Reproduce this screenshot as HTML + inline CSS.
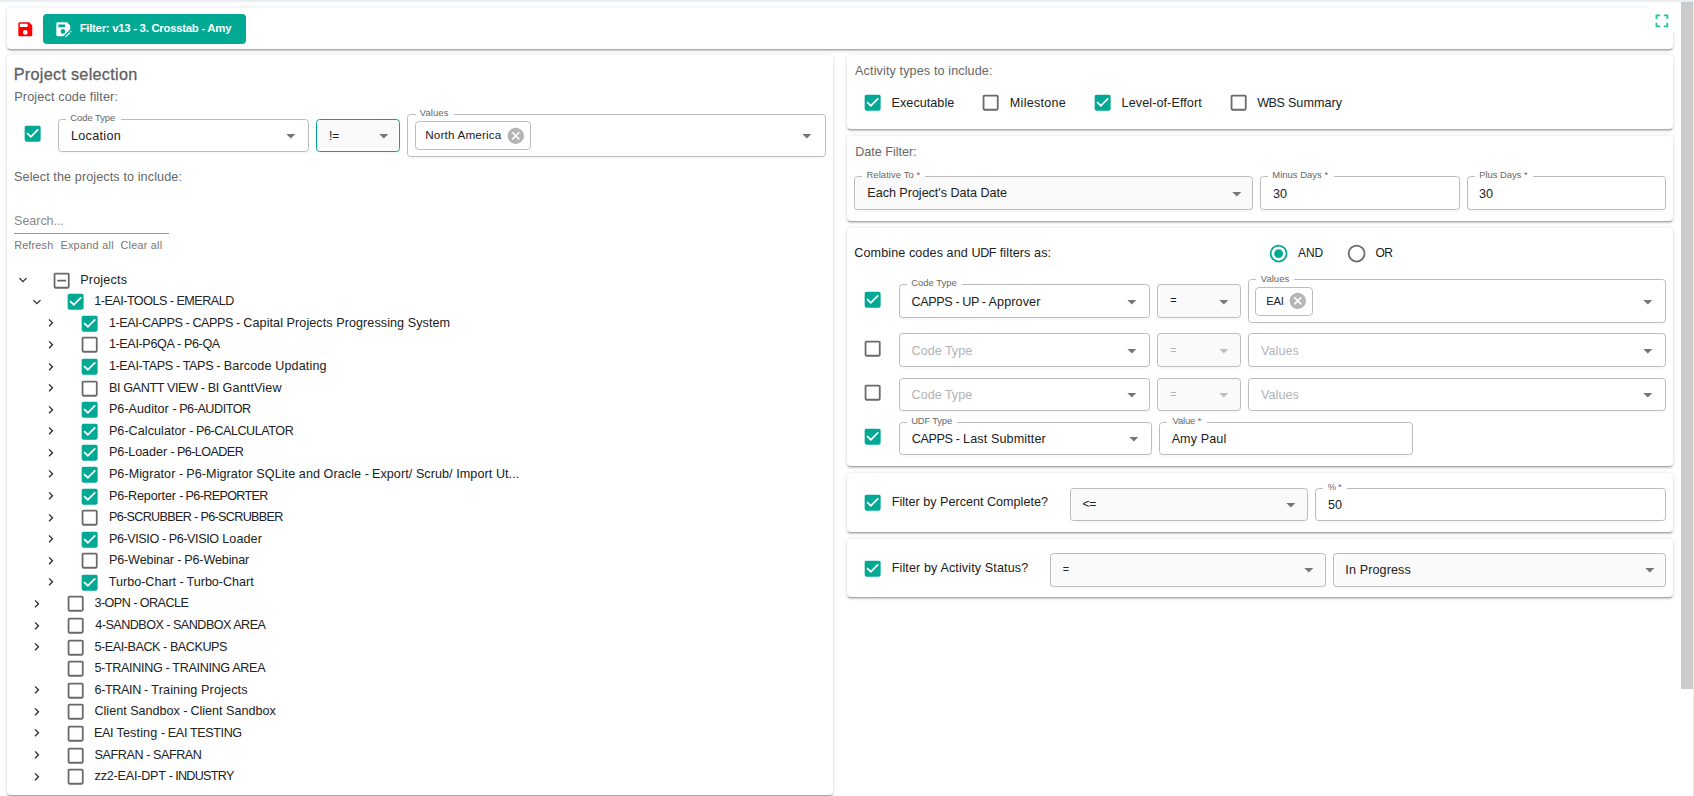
<!DOCTYPE html>
<html lang="en"><head><meta charset="utf-8"><title>Filter: v13 - 3. Crosstab - Amy</title>
<style>
*{box-sizing:content-box;margin:0;padding:0}
html,body{width:1694px;height:796px;overflow:hidden;background:#fff}
body{position:relative;font-family:"Liberation Sans",sans-serif;}
.topstrip{position:absolute;left:0;top:0;width:1694px;height:2px;background:#e8edf1}
.card{position:absolute;background:#fff;border-radius:4px;box-shadow:0 2.7px .9px -1.8px rgba(0,0,0,.2),0 1.8px 1.8px 0 rgba(0,0,0,.14),0 .9px 4.5px 0 rgba(0,0,0,.11)}
.ic{position:absolute;display:block;overflow:visible}
.t{position:absolute;white-space:nowrap;line-height:20px;font-weight:normal;display:block}
.btn{position:absolute;background:#00a994;border:0;border-radius:4px;font:inherit;text-align:left;overflow:visible}
.fld{position:absolute;border:1px solid #bcbcbc;border-radius:3.6px;box-shadow:0 2px .6px rgba(0,0,0,.025)}
.notch{position:absolute}
.tree{position:absolute}
.fsbtn{position:absolute;background:#fff}
.chip{position:absolute;border:1px solid #bdbdbd;border-radius:4px;background:#fff}
.uline{position:absolute;height:1px;background:#949494}
.sbar{position:absolute;left:1681px;top:2px;width:12px;height:686.5px;background:#cbcbcb}
.sedge{position:absolute;left:1693px;top:2px;width:1px;height:794px;background:#e8ecee}
</style></head>
<body>
<div class="topstrip"></div>
<header class="card" style="left:7px;top:8px;width:1666px;height:41px;">
<svg class="ic " style="left:8.70px;top:11.70px;width:18.60px;height:18.60px" viewBox="0 0 24 24"><path fill="#ff0000" d="M15,9H5V5H15M12,19A3,3 0 0,1 9,16A3,3 0 0,1 12,13A3,3 0 0,1 15,16A3,3 0 0,1 12,19M17,3H5C3.89,3 3,3.9 3,5V19A2,2 0 0,0 5,21H19A2,2 0 0,0 21,19V7L17,3Z"/></svg>
<button class="btn" type="button" style="left:36px;top:6px;width:203px;height:30px;">
<svg class="ic " style="left:10.75px;top:5.75px;width:18.50px;height:18.50px" viewBox="0 0 24 24"><path fill="#fff" fill-rule="evenodd" d="M5,3H17L21,7V12L12,21H5A2,2 0 0,1 3,19V5C3,3.9 3.89,3 5,3M5.7,5.9V9.3H14.3V5.9H5.7M11.6,11.8A3,3 0 0,0 8.6,14.8A3,3 0 0,0 11.6,17.8A3,3 0 0,0 14.6,14.8A3,3 0 0,0 11.6,11.8M19.9,16L14.5,21.4V22.5H15.6L21,17.1L19.9,16M20.7,15.2L21.8,16.3L22.7,15.4C22.9,15.2 22.9,14.9 22.7,14.7L22.3,14.3C22.1,14.1 21.8,14.1 21.6,14.3L20.7,15.2Z"/></svg>
<span id="t1" class="t " style="left:36.70px;top:4px;font-size:11.4px;color:#fff;font-weight:bold;letter-spacing:-0.286px;">Filter: v13 - 3. Crosstab - Amy</span>
</button>
</header>
<div class="fsbtn" style="left:1648px;top:2px;width:33px;height:30px;">
<svg class="ic " style="left:2.60px;top:7.50px;width:21.80px;height:21.80px" viewBox="0 0 24 24"><path fill="#1cc6a4" d="M5,5H10V7H7V10H5V5M14,5H19V10H17V7H14V5M17,14H19V19H14V17H17V14M10,17V19H5V14H7V17H10Z"/></svg>
</div>
<section class="card" style="left:7px;top:55px;width:826px;height:740px;">
<h2 id="t2" class="t " style="left:6.72px;top:9px;font-size:16.2px;color:#606060;letter-spacing:0.298px;-webkit-text-stroke:0.28px #606060;">Project selection</h2>
<span id="t3" class="t " style="left:7.29px;top:32px;font-size:12.6px;color:#666666;letter-spacing:0.151px;">Project code filter:</span>
<svg class="ic " style="left:15.05px;top:68.05px;width:21.30px;height:21.30px" viewBox="0 0 24 24"><path fill="#00a994" d="M10,17L5,12L6.41,10.58L10,14.17L17.59,6.58L19,8M19,3H5C3.89,3 3,3.89 3,5V19A2,2 0 0,0 5,21H19A2,2 0 0,0 21,19V5C21,3.89 20.1,3 19,3Z"/></svg>
<div class="fld" style="left:51.00px;top:64.00px;width:249.00px;height:31.00px;background:#fff;border-color:#bcbcbc">
</div>
<div class="notch" style="left:59.00px;top:64.00px;width:55.00px;height:1px;background:#fff"></div>
<span id="t4" class="t lbl" style="left:63.35px;top:53px;font-size:9.45px;color:#666666;letter-spacing:-0.066px;">Code Type</span>
<span id="t5" class="t " style="left:63.96px;top:71px;font-size:12.6px;color:#212121;letter-spacing:0.314px;">Location</span>
<svg class="ic " style="left:272.90px;top:69.75px;width:21.60px;height:21.60px" viewBox="0 0 24 24"><path fill="#757575" d="M7,10L12,15L17,10H7Z"/></svg>
<div class="fld" style="left:309.00px;top:64.00px;width:82.00px;height:31.00px;background:#fafafa;border-color:#00a994">
</div>
<span id="t6" class="t " style="left:321.90px;top:71px;font-size:12.2px;color:#212121;">!=</span>
<svg class="ic " style="left:365.80px;top:69.75px;width:21.60px;height:21.60px" viewBox="0 0 24 24"><path fill="#757575" d="M7,10L12,15L17,10H7Z"/></svg>
<div class="fld" style="left:400.00px;top:59.00px;width:417.00px;height:41.00px;background:#fff;border-color:#bcbcbc">
</div>
<div class="notch" style="left:409.00px;top:59.00px;width:38.00px;height:1px;background:#fff"></div>
<span id="t7" class="t lbl" style="left:412.81px;top:48px;font-size:9.45px;color:#666666;letter-spacing:0.093px;">Values</span>
<div class="chip" style="left:408px;top:66px;width:114px;height:27px;"></div>
<span id="t8" class="t " style="left:418.27px;top:70px;font-size:11.7px;color:#212121;letter-spacing:0.165px;">North America</span>
<svg class="ic " style="left:499.00px;top:71.20px;width:19.60px;height:19.60px" viewBox="0 0 24 24"><path fill="#b5b5b5" d="M12,2C17.53,2 22,6.47 22,12C22,17.53 17.53,22 12,22C6.47,22 2,17.53 2,12C2,6.47 6.47,2 12,2M15.59,7L12,10.59L8.41,7L7,8.41L10.59,12L7,15.59L8.41,17L12,13.41L15.59,17L17,15.59L13.41,12L17,8.41L15.59,7Z"/></svg>
<svg class="ic " style="left:788.90px;top:69.75px;width:21.60px;height:21.60px" viewBox="0 0 24 24"><path fill="#757575" d="M7,10L12,15L17,10H7Z"/></svg>
<span id="t9" class="t " style="left:7.10px;top:112px;font-size:12.6px;color:#666666;letter-spacing:0.109px;">Select the projects to include:</span>
<span id="t10" class="t " style="left:7.12px;top:156px;font-size:12.6px;color:#8a8a8a;letter-spacing:-0.082px;">Search...</span>
<div class="uline" style="left:7px;top:177.5px;width:155px;height:1px;"></div>
<span id="t11" class="t " style="left:7.16px;top:180px;font-size:10.8px;color:#757575;letter-spacing:0.197px;">Refresh</span>
<span id="t12" class="t " style="left:53.41px;top:180px;font-size:10.8px;color:#757575;letter-spacing:0.305px;">Expand all</span>
<span id="t13" class="t " style="left:113.47px;top:180px;font-size:10.8px;color:#757575;letter-spacing:0.245px;">Clear all</span>
<div class="tree" style="left:7px;top:213px;width:812px;height:520px;">
<svg class="ic " style="left:1.30px;top:4.20px;width:15.90px;height:15.90px" viewBox="0 0 24 24"><path fill="#2b2b2b" d="M7.41,8.58L12,13.17L16.59,8.58L18,10L12,16L6,10L7.41,8.58Z"/></svg>
<svg class="ic " style="left:36.75px;top:1.70px;width:21.30px;height:21.30px" viewBox="0 0 24 24"><path fill="#696969" d="M19,19V5H5V19H19M19,3A2,2 0 0,1 21,5V19A2,2 0 0,1 19,21H5A2,2 0 0,1 3,19V5C3,3.89 3.9,3 5,3H19M17,11V13H7V11H17Z"/></svg>
<span id="t14" class="t " style="left:66.16px;top:2px;font-size:12.6px;color:#212121;letter-spacing:0.192px;">Projects</span>
<svg class="ic " style="left:15.20px;top:25.79px;width:15.90px;height:15.90px" viewBox="0 0 24 24"><path fill="#2b2b2b" d="M7.41,8.58L12,13.17L16.59,8.58L18,10L12,16L6,10L7.41,8.58Z"/></svg>
<svg class="ic " style="left:50.85px;top:23.29px;width:21.30px;height:21.30px" viewBox="0 0 24 24"><path fill="#00a994" d="M10,17L5,12L6.41,10.58L10,14.17L17.59,6.58L19,8M19,3H5C3.89,3 3,3.89 3,5V19A2,2 0 0,0 5,21H19A2,2 0 0,0 21,19V5C21,3.89 20.1,3 19,3Z"/></svg>
<span id="t15" class="t " style="left:80.27px;top:23px;font-size:12.6px;color:#212121;letter-spacing:-0.010px;"><span style="letter-spacing:-0.510px">1-EAI-TOOLS - EMERALD</span></span>
<svg class="ic " style="left:28.90px;top:47.37px;width:15.60px;height:15.60px" viewBox="0 0 24 24"><path fill="#2b2b2b" d="M8.59,16.58L13.17,12L8.59,7.41L10,6L16,12L10,18L8.59,16.58Z"/></svg>
<svg class="ic " style="left:64.85px;top:44.87px;width:21.30px;height:21.30px" viewBox="0 0 24 24"><path fill="#00a994" d="M10,17L5,12L6.41,10.58L10,14.17L17.59,6.58L19,8M19,3H5C3.89,3 3,3.89 3,5V19A2,2 0 0,0 5,21H19A2,2 0 0,0 21,19V5C21,3.89 20.1,3 19,3Z"/></svg>
<span id="t16" class="t " style="left:94.88px;top:45px;font-size:12.6px;color:#212121;letter-spacing:0.069px;"><span style="letter-spacing:-0.431px">1-EAI-CAPPS - CAPPS -</span> Capital Projects Progressing System</span>
<svg class="ic " style="left:28.90px;top:68.95px;width:15.60px;height:15.60px" viewBox="0 0 24 24"><path fill="#2b2b2b" d="M8.59,16.58L13.17,12L8.59,7.41L10,6L16,12L10,18L8.59,16.58Z"/></svg>
<svg class="ic " style="left:64.85px;top:66.46px;width:21.30px;height:21.30px" viewBox="0 0 24 24"><path fill="#696969" d="M19,3H5C3.89,3 3,3.89 3,5V19A2,2 0 0,0 5,21H19A2,2 0 0,0 21,19V5C21,3.89 20.1,3 19,3M19,5V19H5V5H19Z"/></svg>
<span id="t17" class="t " style="left:94.88px;top:66px;font-size:12.6px;color:#212121;letter-spacing:0.133px;"><span style="letter-spacing:-0.367px">1-EAI-P6QA - P6-QA</span></span>
<svg class="ic " style="left:28.90px;top:90.54px;width:15.60px;height:15.60px" viewBox="0 0 24 24"><path fill="#2b2b2b" d="M8.59,16.58L13.17,12L8.59,7.41L10,6L16,12L10,18L8.59,16.58Z"/></svg>
<svg class="ic " style="left:64.85px;top:88.04px;width:21.30px;height:21.30px" viewBox="0 0 24 24"><path fill="#00a994" d="M10,17L5,12L6.41,10.58L10,14.17L17.59,6.58L19,8M19,3H5C3.89,3 3,3.89 3,5V19A2,2 0 0,0 5,21H19A2,2 0 0,0 21,19V5C21,3.89 20.1,3 19,3Z"/></svg>
<span id="t18" class="t " style="left:94.88px;top:88px;font-size:12.6px;color:#212121;letter-spacing:0.131px;"><span style="letter-spacing:-0.369px">1-EAI-TAPS - TAPS -</span> Barcode Updating</span>
<svg class="ic " style="left:28.90px;top:112.12px;width:15.60px;height:15.60px" viewBox="0 0 24 24"><path fill="#2b2b2b" d="M8.59,16.58L13.17,12L8.59,7.41L10,6L16,12L10,18L8.59,16.58Z"/></svg>
<svg class="ic " style="left:64.85px;top:109.63px;width:21.30px;height:21.30px" viewBox="0 0 24 24"><path fill="#696969" d="M19,3H5C3.89,3 3,3.89 3,5V19A2,2 0 0,0 5,21H19A2,2 0 0,0 21,19V5C21,3.89 20.1,3 19,3M19,5V19H5V5H19Z"/></svg>
<span id="t19" class="t " style="left:94.90px;top:110px;font-size:12.6px;color:#212121;letter-spacing:0.134px;"><span style="letter-spacing:-0.366px">BI GANTT VIEW - BI</span> GanttView</span>
<svg class="ic " style="left:28.90px;top:133.71px;width:15.60px;height:15.60px" viewBox="0 0 24 24"><path fill="#2b2b2b" d="M8.59,16.58L13.17,12L8.59,7.41L10,6L16,12L10,18L8.59,16.58Z"/></svg>
<svg class="ic " style="left:64.85px;top:131.21px;width:21.30px;height:21.30px" viewBox="0 0 24 24"><path fill="#00a994" d="M10,17L5,12L6.41,10.58L10,14.17L17.59,6.58L19,8M19,3H5C3.89,3 3,3.89 3,5V19A2,2 0 0,0 5,21H19A2,2 0 0,0 21,19V5C21,3.89 20.1,3 19,3Z"/></svg>
<span id="t20" class="t " style="left:94.90px;top:131px;font-size:12.6px;color:#212121;letter-spacing:0.045px;">P6-Auditor <span style="letter-spacing:-0.455px">- P6-AUDITOR</span></span>
<svg class="ic " style="left:28.90px;top:155.30px;width:15.60px;height:15.60px" viewBox="0 0 24 24"><path fill="#2b2b2b" d="M8.59,16.58L13.17,12L8.59,7.41L10,6L16,12L10,18L8.59,16.58Z"/></svg>
<svg class="ic " style="left:64.85px;top:152.80px;width:21.30px;height:21.30px" viewBox="0 0 24 24"><path fill="#00a994" d="M10,17L5,12L6.41,10.58L10,14.17L17.59,6.58L19,8M19,3H5C3.89,3 3,3.89 3,5V19A2,2 0 0,0 5,21H19A2,2 0 0,0 21,19V5C21,3.89 20.1,3 19,3Z"/></svg>
<span id="t21" class="t " style="left:94.90px;top:153px;font-size:12.6px;color:#212121;letter-spacing:0.044px;">P6-Calculator <span style="letter-spacing:-0.456px">- P6-CALCULATOR</span></span>
<svg class="ic " style="left:28.90px;top:176.88px;width:15.60px;height:15.60px" viewBox="0 0 24 24"><path fill="#2b2b2b" d="M8.59,16.58L13.17,12L8.59,7.41L10,6L16,12L10,18L8.59,16.58Z"/></svg>
<svg class="ic " style="left:64.85px;top:174.38px;width:21.30px;height:21.30px" viewBox="0 0 24 24"><path fill="#00a994" d="M10,17L5,12L6.41,10.58L10,14.17L17.59,6.58L19,8M19,3H5C3.89,3 3,3.89 3,5V19A2,2 0 0,0 5,21H19A2,2 0 0,0 21,19V5C21,3.89 20.1,3 19,3Z"/></svg>
<span id="t22" class="t " style="left:94.90px;top:174px;font-size:12.6px;color:#212121;letter-spacing:-0.078px;">P6-Loader <span style="letter-spacing:-0.578px">- P6-LOADER</span></span>
<svg class="ic " style="left:28.90px;top:198.46px;width:15.60px;height:15.60px" viewBox="0 0 24 24"><path fill="#2b2b2b" d="M8.59,16.58L13.17,12L8.59,7.41L10,6L16,12L10,18L8.59,16.58Z"/></svg>
<svg class="ic " style="left:64.85px;top:195.97px;width:21.30px;height:21.30px" viewBox="0 0 24 24"><path fill="#00a994" d="M10,17L5,12L6.41,10.58L10,14.17L17.59,6.58L19,8M19,3H5C3.89,3 3,3.89 3,5V19A2,2 0 0,0 5,21H19A2,2 0 0,0 21,19V5C21,3.89 20.1,3 19,3Z"/></svg>
<span id="t23" class="t " style="left:94.90px;top:196px;font-size:12.6px;color:#212121;letter-spacing:0.065px;">P6-Migrator <span style="letter-spacing:-0.435px">-</span> P6-Migrator SQLite and Oracle <span style="letter-spacing:-0.435px">-</span> Export/ Scrub/ Import Ut...</span>
<svg class="ic " style="left:28.90px;top:220.05px;width:15.60px;height:15.60px" viewBox="0 0 24 24"><path fill="#2b2b2b" d="M8.59,16.58L13.17,12L8.59,7.41L10,6L16,12L10,18L8.59,16.58Z"/></svg>
<svg class="ic " style="left:64.85px;top:217.55px;width:21.30px;height:21.30px" viewBox="0 0 24 24"><path fill="#00a994" d="M10,17L5,12L6.41,10.58L10,14.17L17.59,6.58L19,8M19,3H5C3.89,3 3,3.89 3,5V19A2,2 0 0,0 5,21H19A2,2 0 0,0 21,19V5C21,3.89 20.1,3 19,3Z"/></svg>
<span id="t24" class="t " style="left:94.90px;top:218px;font-size:12.6px;color:#212121;letter-spacing:-0.151px;">P6-Reporter <span style="letter-spacing:-0.651px">- P6-REPORTER</span></span>
<svg class="ic " style="left:28.90px;top:241.64px;width:15.60px;height:15.60px" viewBox="0 0 24 24"><path fill="#2b2b2b" d="M8.59,16.58L13.17,12L8.59,7.41L10,6L16,12L10,18L8.59,16.58Z"/></svg>
<svg class="ic " style="left:64.85px;top:239.14px;width:21.30px;height:21.30px" viewBox="0 0 24 24"><path fill="#696969" d="M19,3H5C3.89,3 3,3.89 3,5V19A2,2 0 0,0 5,21H19A2,2 0 0,0 21,19V5C21,3.89 20.1,3 19,3M19,5V19H5V5H19Z"/></svg>
<span id="t25" class="t " style="left:94.90px;top:239px;font-size:12.6px;color:#212121;letter-spacing:-0.161px;"><span style="letter-spacing:-0.661px">P6-SCRUBBER - P6-SCRUBBER</span></span>
<svg class="ic " style="left:28.90px;top:263.22px;width:15.60px;height:15.60px" viewBox="0 0 24 24"><path fill="#2b2b2b" d="M8.59,16.58L13.17,12L8.59,7.41L10,6L16,12L10,18L8.59,16.58Z"/></svg>
<svg class="ic " style="left:64.85px;top:260.72px;width:21.30px;height:21.30px" viewBox="0 0 24 24"><path fill="#00a994" d="M10,17L5,12L6.41,10.58L10,14.17L17.59,6.58L19,8M19,3H5C3.89,3 3,3.89 3,5V19A2,2 0 0,0 5,21H19A2,2 0 0,0 21,19V5C21,3.89 20.1,3 19,3Z"/></svg>
<span id="t26" class="t " style="left:94.90px;top:261px;font-size:12.6px;color:#212121;letter-spacing:0.089px;"><span style="letter-spacing:-0.411px">P6-VISIO - P6-VISIO</span> Loader</span>
<svg class="ic " style="left:28.90px;top:284.81px;width:15.60px;height:15.60px" viewBox="0 0 24 24"><path fill="#2b2b2b" d="M8.59,16.58L13.17,12L8.59,7.41L10,6L16,12L10,18L8.59,16.58Z"/></svg>
<svg class="ic " style="left:64.85px;top:282.31px;width:21.30px;height:21.30px" viewBox="0 0 24 24"><path fill="#696969" d="M19,3H5C3.89,3 3,3.89 3,5V19A2,2 0 0,0 5,21H19A2,2 0 0,0 21,19V5C21,3.89 20.1,3 19,3M19,5V19H5V5H19Z"/></svg>
<span id="t27" class="t " style="left:94.90px;top:282px;font-size:12.6px;color:#212121;letter-spacing:-0.129px;">P6-Webinar <span style="letter-spacing:-0.629px">-</span> P6-Webinar</span>
<svg class="ic " style="left:28.90px;top:306.39px;width:15.60px;height:15.60px" viewBox="0 0 24 24"><path fill="#2b2b2b" d="M8.59,16.58L13.17,12L8.59,7.41L10,6L16,12L10,18L8.59,16.58Z"/></svg>
<svg class="ic " style="left:64.85px;top:303.89px;width:21.30px;height:21.30px" viewBox="0 0 24 24"><path fill="#00a994" d="M10,17L5,12L6.41,10.58L10,14.17L17.59,6.58L19,8M19,3H5C3.89,3 3,3.89 3,5V19A2,2 0 0,0 5,21H19A2,2 0 0,0 21,19V5C21,3.89 20.1,3 19,3Z"/></svg>
<span id="t28" class="t " style="left:94.84px;top:304px;font-size:12.6px;color:#212121;letter-spacing:-0.016px;">Turbo-Chart <span style="letter-spacing:-0.516px">-</span> Turbo-Chart</span>
<svg class="ic " style="left:15.20px;top:327.98px;width:15.60px;height:15.60px" viewBox="0 0 24 24"><path fill="#2b2b2b" d="M8.59,16.58L13.17,12L8.59,7.41L10,6L16,12L10,18L8.59,16.58Z"/></svg>
<svg class="ic " style="left:50.85px;top:325.48px;width:21.30px;height:21.30px" viewBox="0 0 24 24"><path fill="#696969" d="M19,3H5C3.89,3 3,3.89 3,5V19A2,2 0 0,0 5,21H19A2,2 0 0,0 21,19V5C21,3.89 20.1,3 19,3M19,5V19H5V5H19Z"/></svg>
<span id="t29" class="t " style="left:80.44px;top:325px;font-size:12.6px;color:#212121;letter-spacing:-0.045px;"><span style="letter-spacing:-0.545px">3-OPN - ORACLE</span></span>
<svg class="ic " style="left:15.20px;top:349.56px;width:15.60px;height:15.60px" viewBox="0 0 24 24"><path fill="#2b2b2b" d="M8.59,16.58L13.17,12L8.59,7.41L10,6L16,12L10,18L8.59,16.58Z"/></svg>
<svg class="ic " style="left:50.85px;top:347.06px;width:21.30px;height:21.30px" viewBox="0 0 24 24"><path fill="#696969" d="M19,3H5C3.89,3 3,3.89 3,5V19A2,2 0 0,0 5,21H19A2,2 0 0,0 21,19V5C21,3.89 20.1,3 19,3M19,5V19H5V5H19Z"/></svg>
<span id="t30" class="t " style="left:81.24px;top:347px;font-size:12.6px;color:#212121;letter-spacing:-0.019px;"><span style="letter-spacing:-0.519px">4-SANDBOX - SANDBOX AREA</span></span>
<svg class="ic " style="left:15.20px;top:371.15px;width:15.60px;height:15.60px" viewBox="0 0 24 24"><path fill="#2b2b2b" d="M8.59,16.58L13.17,12L8.59,7.41L10,6L16,12L10,18L8.59,16.58Z"/></svg>
<svg class="ic " style="left:50.85px;top:368.65px;width:21.30px;height:21.30px" viewBox="0 0 24 24"><path fill="#696969" d="M19,3H5C3.89,3 3,3.89 3,5V19A2,2 0 0,0 5,21H19A2,2 0 0,0 21,19V5C21,3.89 20.1,3 19,3M19,5V19H5V5H19Z"/></svg>
<span id="t31" class="t " style="left:80.38px;top:369px;font-size:12.6px;color:#212121;letter-spacing:0.065px;"><span style="letter-spacing:-0.435px">5-EAI-BACK - BACKUPS</span></span>
<svg class="ic " style="left:50.85px;top:390.23px;width:21.30px;height:21.30px" viewBox="0 0 24 24"><path fill="#696969" d="M19,3H5C3.89,3 3,3.89 3,5V19A2,2 0 0,0 5,21H19A2,2 0 0,0 21,19V5C21,3.89 20.1,3 19,3M19,5V19H5V5H19Z"/></svg>
<span id="t32" class="t " style="left:80.38px;top:390px;font-size:12.6px;color:#212121;letter-spacing:0.163px;"><span style="letter-spacing:-0.337px">5-TRAINING - TRAINING AREA</span></span>
<svg class="ic " style="left:15.20px;top:414.32px;width:15.60px;height:15.60px" viewBox="0 0 24 24"><path fill="#2b2b2b" d="M8.59,16.58L13.17,12L8.59,7.41L10,6L16,12L10,18L8.59,16.58Z"/></svg>
<svg class="ic " style="left:50.85px;top:411.82px;width:21.30px;height:21.30px" viewBox="0 0 24 24"><path fill="#696969" d="M19,3H5C3.89,3 3,3.89 3,5V19A2,2 0 0,0 5,21H19A2,2 0 0,0 21,19V5C21,3.89 20.1,3 19,3M19,5V19H5V5H19Z"/></svg>
<span id="t33" class="t " style="left:80.51px;top:412px;font-size:12.6px;color:#212121;letter-spacing:0.136px;"><span style="letter-spacing:-0.364px">6-TRAIN -</span> Training Projects</span>
<svg class="ic " style="left:15.20px;top:435.90px;width:15.60px;height:15.60px" viewBox="0 0 24 24"><path fill="#2b2b2b" d="M8.59,16.58L13.17,12L8.59,7.41L10,6L16,12L10,18L8.59,16.58Z"/></svg>
<svg class="ic " style="left:50.85px;top:433.40px;width:21.30px;height:21.30px" viewBox="0 0 24 24"><path fill="#696969" d="M19,3H5C3.89,3 3,3.89 3,5V19A2,2 0 0,0 5,21H19A2,2 0 0,0 21,19V5C21,3.89 20.1,3 19,3M19,5V19H5V5H19Z"/></svg>
<span id="t34" class="t " style="left:80.50px;top:433px;font-size:12.6px;color:#212121;letter-spacing:-0.009px;">Client Sandbox <span style="letter-spacing:-0.509px">-</span> Client Sandbox</span>
<svg class="ic " style="left:15.20px;top:457.49px;width:15.60px;height:15.60px" viewBox="0 0 24 24"><path fill="#2b2b2b" d="M8.59,16.58L13.17,12L8.59,7.41L10,6L16,12L10,18L8.59,16.58Z"/></svg>
<svg class="ic " style="left:50.85px;top:454.99px;width:21.30px;height:21.30px" viewBox="0 0 24 24"><path fill="#696969" d="M19,3H5C3.89,3 3,3.89 3,5V19A2,2 0 0,0 5,21H19A2,2 0 0,0 21,19V5C21,3.89 20.1,3 19,3M19,5V19H5V5H19Z"/></svg>
<span id="t35" class="t " style="left:80.06px;top:455px;font-size:12.6px;color:#212121;letter-spacing:0.116px;"><span style="letter-spacing:-0.384px">EAI</span> Testing <span style="letter-spacing:-0.384px">- EAI TESTING</span></span>
<svg class="ic " style="left:15.20px;top:479.07px;width:15.60px;height:15.60px" viewBox="0 0 24 24"><path fill="#2b2b2b" d="M8.59,16.58L13.17,12L8.59,7.41L10,6L16,12L10,18L8.59,16.58Z"/></svg>
<svg class="ic " style="left:50.85px;top:476.57px;width:21.30px;height:21.30px" viewBox="0 0 24 24"><path fill="#696969" d="M19,3H5C3.89,3 3,3.89 3,5V19A2,2 0 0,0 5,21H19A2,2 0 0,0 21,19V5C21,3.89 20.1,3 19,3M19,5V19H5V5H19Z"/></svg>
<span id="t36" class="t " style="left:80.54px;top:477px;font-size:12.6px;color:#212121;letter-spacing:0.075px;"><span style="letter-spacing:-0.425px">SAFRAN - SAFRAN</span></span>
<svg class="ic " style="left:15.20px;top:500.66px;width:15.60px;height:15.60px" viewBox="0 0 24 24"><path fill="#2b2b2b" d="M8.59,16.58L13.17,12L8.59,7.41L10,6L16,12L10,18L8.59,16.58Z"/></svg>
<svg class="ic " style="left:50.85px;top:498.16px;width:21.30px;height:21.30px" viewBox="0 0 24 24"><path fill="#696969" d="M19,3H5C3.89,3 3,3.89 3,5V19A2,2 0 0,0 5,21H19A2,2 0 0,0 21,19V5C21,3.89 20.1,3 19,3M19,5V19H5V5H19Z"/></svg>
<span id="t37" class="t " style="left:80.59px;top:498px;font-size:12.6px;color:#212121;letter-spacing:-0.206px;">zz2-EAI-DPT <span style="letter-spacing:-0.706px">- INDUSTRY</span></span>
</div>
</section>
<section class="card" style="left:847px;top:55px;width:826px;height:74px;">
<span id="t38" class="t " style="left:8.08px;top:6px;font-size:12.6px;color:#666666;letter-spacing:0.121px;">Activity types to include:</span>
<svg class="ic " style="left:14.95px;top:37.05px;width:21.30px;height:21.30px" viewBox="0 0 24 24"><path fill="#00a994" d="M10,17L5,12L6.41,10.58L10,14.17L17.59,6.58L19,8M19,3H5C3.89,3 3,3.89 3,5V19A2,2 0 0,0 5,21H19A2,2 0 0,0 21,19V5C21,3.89 20.1,3 19,3Z"/></svg>
<span id="t39" class="t " style="left:44.61px;top:38px;font-size:12.6px;color:#212121;letter-spacing:0.034px;">Executable</span>
<svg class="ic " style="left:132.85px;top:37.05px;width:21.30px;height:21.30px" viewBox="0 0 24 24"><path fill="#696969" d="M19,3H5C3.89,3 3,3.89 3,5V19A2,2 0 0,0 5,21H19A2,2 0 0,0 21,19V5C21,3.89 20.1,3 19,3M19,5V19H5V5H19Z"/></svg>
<span id="t40" class="t " style="left:162.83px;top:38px;font-size:12.6px;color:#212121;letter-spacing:0.255px;">Milestone</span>
<svg class="ic " style="left:244.95px;top:37.05px;width:21.30px;height:21.30px" viewBox="0 0 24 24"><path fill="#00a994" d="M10,17L5,12L6.41,10.58L10,14.17L17.59,6.58L19,8M19,3H5C3.89,3 3,3.89 3,5V19A2,2 0 0,0 5,21H19A2,2 0 0,0 21,19V5C21,3.89 20.1,3 19,3Z"/></svg>
<span id="t41" class="t " style="left:274.60px;top:38px;font-size:12.6px;color:#212121;letter-spacing:0.090px;">Level-of-Effort</span>
<svg class="ic " style="left:381.35px;top:37.05px;width:21.30px;height:21.30px" viewBox="0 0 24 24"><path fill="#696969" d="M19,3H5C3.89,3 3,3.89 3,5V19A2,2 0 0,0 5,21H19A2,2 0 0,0 21,19V5C21,3.89 20.1,3 19,3M19,5V19H5V5H19Z"/></svg>
<span id="t42" class="t " style="left:410.14px;top:38px;font-size:12.6px;color:#212121;letter-spacing:0.027px;"><span style="letter-spacing:-0.473px">WBS</span> Summary</span>
</section>
<section class="card" style="left:847px;top:136px;width:826px;height:85px;">
<span id="t43" class="t " style="left:8.19px;top:6px;font-size:12.6px;color:#666666;letter-spacing:-0.016px;">Date Filter:</span>
<div class="fld" style="left:7.00px;top:40.00px;width:397.00px;height:32.00px;background:#fafafa;border-color:#bcbcbc">
</div>
<div class="notch" style="left:15.00px;top:40.00px;width:63.00px;height:1px;background:#fff"></div>
<span id="t44" class="t lbl" style="left:19.46px;top:29px;font-size:9.45px;color:#666666;letter-spacing:0.071px;">Relative To *</span>
<span id="t45" class="t " style="left:20.29px;top:47px;font-size:12.6px;color:#212121;letter-spacing:-0.028px;">Each Project's Data Date</span>
<svg class="ic " style="left:379.00px;top:46.75px;width:21.60px;height:21.60px" viewBox="0 0 24 24"><path fill="#757575" d="M7,10L12,15L17,10H7Z"/></svg>
<div class="fld" style="left:413.00px;top:40.00px;width:198.00px;height:32.00px;background:#fff;border-color:#bcbcbc">
</div>
<div class="notch" style="left:421.00px;top:40.00px;width:66.00px;height:1px;background:#fff"></div>
<span id="t46" class="t lbl" style="left:425.27px;top:29px;font-size:9.45px;color:#666666;letter-spacing:0.022px;">Minus Days *</span>
<span id="t47" class="t " style="left:426.10px;top:48px;font-size:12.6px;color:#212121;">30</span>
<div class="fld" style="left:620.00px;top:40.00px;width:197.00px;height:32.00px;background:#fff;border-color:#bcbcbc">
</div>
<div class="notch" style="left:628.00px;top:40.00px;width:58.00px;height:1px;background:#fff"></div>
<span id="t48" class="t lbl" style="left:632.14px;top:29px;font-size:9.45px;color:#666666;letter-spacing:-0.034px;">Plus Days *</span>
<span id="t49" class="t " style="left:632.08px;top:48px;font-size:12.6px;color:#212121;">30</span>
</section>
<section class="card" style="left:847px;top:228px;width:826px;height:238px;">
<span id="t50" class="t " style="left:7.33px;top:15px;font-size:12.6px;color:#212121;letter-spacing:0.092px;">Combine codes and <span style="letter-spacing:-0.408px">UDF</span> filters as:</span>
<svg class="ic " style="left:420.80px;top:14.80px;width:21.20px;height:21.20px" viewBox="0 0 24 24"><path fill="#00a994" d="M12,20A8,8 0 0,1 4,12A8,8 0 0,1 12,4A8,8 0 0,1 20,12A8,8 0 0,1 12,20M12,2A10,10 0 0,0 2,12A10,10 0 0,0 12,22A10,10 0 0,0 22,12A10,10 0 0,0 12,2M12,7A5,5 0 0,0 7,12A5,5 0 0,0 12,17A5,5 0 0,0 17,12A5,5 0 0,0 12,7Z"/></svg>
<span id="t51" class="t " style="left:450.95px;top:15px;font-size:12.0px;color:#212121;letter-spacing:-0.05px;">AND</span>
<svg class="ic " style="left:498.80px;top:14.80px;width:21.20px;height:21.20px" viewBox="0 0 24 24"><path fill="#696969" d="M12,20A8,8 0 0,1 4,12A8,8 0 0,1 12,4A8,8 0 0,1 20,12A8,8 0 0,1 12,20M12,2A10,10 0 0,0 2,12A10,10 0 0,0 12,22A10,10 0 0,0 22,12A10,10 0 0,0 12,2Z"/></svg>
<span id="t52" class="t " style="left:528.44px;top:15px;font-size:12.0px;color:#212121;letter-spacing:-0.5px;">OR</span>
<svg class="ic " style="left:14.95px;top:61.05px;width:21.30px;height:21.30px" viewBox="0 0 24 24"><path fill="#00a994" d="M10,17L5,12L6.41,10.58L10,14.17L17.59,6.58L19,8M19,3H5C3.89,3 3,3.89 3,5V19A2,2 0 0,0 5,21H19A2,2 0 0,0 21,19V5C21,3.89 20.1,3 19,3Z"/></svg>
<div class="fld" style="left:52.00px;top:56.00px;width:249.00px;height:32.00px;background:#fff;border-color:#bcbcbc">
</div>
<div class="notch" style="left:60.00px;top:56.00px;width:55.00px;height:1px;background:#fff"></div>
<span id="t53" class="t lbl" style="left:64.14px;top:45px;font-size:9.45px;color:#666666;letter-spacing:0.006px;">Code Type</span>
<span id="t54" class="t " style="left:64.60px;top:64px;font-size:12.6px;color:#212121;letter-spacing:0.099px;"><span style="letter-spacing:-0.401px">CAPPS - UP -</span> Approver</span>
<svg class="ic " style="left:273.90px;top:62.75px;width:21.60px;height:21.60px" viewBox="0 0 24 24"><path fill="#757575" d="M7,10L12,15L17,10H7Z"/></svg>
<div class="fld" style="left:310.00px;top:56.00px;width:82.00px;height:32.00px;background:#fafafa;border-color:#bcbcbc">
</div>
<span id="t55" class="t " style="left:323.25px;top:62px;font-size:10.8px;color:#212121;">=</span>
<svg class="ic " style="left:366.00px;top:62.75px;width:21.60px;height:21.60px" viewBox="0 0 24 24"><path fill="#757575" d="M7,10L12,15L17,10H7Z"/></svg>
<div class="fld" style="left:401.00px;top:51.00px;width:416.00px;height:42.00px;background:#fff;border-color:#bcbcbc">
</div>
<div class="notch" style="left:409.00px;top:51.00px;width:38.00px;height:1px;background:#fff"></div>
<span id="t56" class="t lbl" style="left:413.87px;top:41px;font-size:9.45px;color:#666666;letter-spacing:0.022px;">Values</span>
<div class="chip" style="left:408.3px;top:59.3px;width:55.5px;height:27.2px;"></div>
<span id="t57" class="t " style="left:419.23px;top:63px;font-size:11.2px;color:#212121;letter-spacing:-0.15px;">EAI</span>
<svg class="ic " style="left:441.20px;top:63.20px;width:19.60px;height:19.60px" viewBox="0 0 24 24"><path fill="#b5b5b5" d="M12,2C17.53,2 22,6.47 22,12C22,17.53 17.53,22 12,22C6.47,22 2,17.53 2,12C2,6.47 6.47,2 12,2M15.59,7L12,10.59L8.41,7L7,8.41L10.59,12L7,15.59L8.41,17L12,13.41L15.59,17L17,15.59L13.41,12L17,8.41L15.59,7Z"/></svg>
<svg class="ic " style="left:789.80px;top:62.65px;width:21.60px;height:21.60px" viewBox="0 0 24 24"><path fill="#757575" d="M7,10L12,15L17,10H7Z"/></svg>
<svg class="ic " style="left:14.95px;top:110.25px;width:21.30px;height:21.30px" viewBox="0 0 24 24"><path fill="#696969" d="M19,3H5C3.89,3 3,3.89 3,5V19A2,2 0 0,0 5,21H19A2,2 0 0,0 21,19V5C21,3.89 20.1,3 19,3M19,5V19H5V5H19Z"/></svg>
<div class="fld" style="left:52.00px;top:105.00px;width:249.00px;height:32.00px;background:#fff;border-color:#bcbcbc">
</div>
<span id="t58" class="t " style="left:64.57px;top:113px;font-size:12.6px;color:#b3b3b3;letter-spacing:-0.013px;">Code Type</span>
<svg class="ic " style="left:273.90px;top:111.65px;width:21.60px;height:21.60px" viewBox="0 0 24 24"><path fill="#757575" d="M7,10L12,15L17,10H7Z"/></svg>
<div class="fld" style="left:310.00px;top:105.00px;width:82.00px;height:32.00px;background:#fafafa;border-color:#bcbcbc">
</div>
<span id="t59" class="t " style="left:323.25px;top:112px;font-size:10.8px;color:#b3b3b3;">=</span>
<svg class="ic " style="left:366.00px;top:111.65px;width:21.60px;height:21.60px" viewBox="0 0 24 24"><path fill="#bdbdbd" d="M7,10L12,15L17,10H7Z"/></svg>
<div class="fld" style="left:401.00px;top:105.00px;width:416.00px;height:32.00px;background:#fff;border-color:#bcbcbc">
</div>
<span id="t60" class="t " style="left:414.09px;top:113px;font-size:12.6px;color:#b3b3b3;letter-spacing:0.014px;">Values</span>
<svg class="ic " style="left:789.80px;top:111.65px;width:21.60px;height:21.60px" viewBox="0 0 24 24"><path fill="#757575" d="M7,10L12,15L17,10H7Z"/></svg>
<svg class="ic " style="left:14.95px;top:153.95px;width:21.30px;height:21.30px" viewBox="0 0 24 24"><path fill="#696969" d="M19,3H5C3.89,3 3,3.89 3,5V19A2,2 0 0,0 5,21H19A2,2 0 0,0 21,19V5C21,3.89 20.1,3 19,3M19,5V19H5V5H19Z"/></svg>
<div class="fld" style="left:52.00px;top:150.00px;width:249.00px;height:31.00px;background:#fff;border-color:#bcbcbc">
</div>
<span id="t61" class="t " style="left:64.57px;top:157px;font-size:12.6px;color:#b3b3b3;letter-spacing:-0.013px;">Code Type</span>
<svg class="ic " style="left:273.90px;top:156.15px;width:21.60px;height:21.60px" viewBox="0 0 24 24"><path fill="#757575" d="M7,10L12,15L17,10H7Z"/></svg>
<div class="fld" style="left:310.00px;top:150.00px;width:82.00px;height:31.00px;background:#fafafa;border-color:#bcbcbc">
</div>
<span id="t62" class="t " style="left:323.25px;top:156px;font-size:10.8px;color:#b3b3b3;">=</span>
<svg class="ic " style="left:366.00px;top:156.15px;width:21.60px;height:21.60px" viewBox="0 0 24 24"><path fill="#bdbdbd" d="M7,10L12,15L17,10H7Z"/></svg>
<div class="fld" style="left:401.00px;top:150.00px;width:416.00px;height:31.00px;background:#fff;border-color:#bcbcbc">
</div>
<span id="t63" class="t " style="left:414.09px;top:157px;font-size:12.6px;color:#b3b3b3;letter-spacing:0.014px;">Values</span>
<svg class="ic " style="left:789.80px;top:156.15px;width:21.60px;height:21.60px" viewBox="0 0 24 24"><path fill="#757575" d="M7,10L12,15L17,10H7Z"/></svg>
<svg class="ic " style="left:14.85px;top:198.05px;width:21.30px;height:21.30px" viewBox="0 0 24 24"><path fill="#00a994" d="M10,17L5,12L6.41,10.58L10,14.17L17.59,6.58L19,8M19,3H5C3.89,3 3,3.89 3,5V19A2,2 0 0,0 5,21H19A2,2 0 0,0 21,19V5C21,3.89 20.1,3 19,3Z"/></svg>
<div class="fld" style="left:52.00px;top:194.00px;width:251.00px;height:31.00px;background:#fff;border-color:#bcbcbc">
</div>
<div class="notch" style="left:60.00px;top:194.00px;width:50.00px;height:1px;background:#fff"></div>
<span id="t64" class="t lbl" style="left:64.15px;top:183px;font-size:9.45px;color:#666666;letter-spacing:-0.187px;">UDF Type</span>
<span id="t65" class="t " style="left:64.76px;top:201px;font-size:12.6px;color:#212121;letter-spacing:0.114px;"><span style="letter-spacing:-0.386px">CAPPS -</span> Last Submitter</span>
<svg class="ic " style="left:276.00px;top:200.15px;width:21.60px;height:21.60px" viewBox="0 0 24 24"><path fill="#757575" d="M7,10L12,15L17,10H7Z"/></svg>
<div class="fld" style="left:312.00px;top:194.00px;width:252.00px;height:31.00px;background:#fff;border-color:#bcbcbc">
</div>
<div class="notch" style="left:320.00px;top:194.00px;width:40.00px;height:1px;background:#fff"></div>
<span id="t66" class="t lbl" style="left:325.46px;top:183px;font-size:9.45px;color:#666666;letter-spacing:-0.133px;">Value *</span>
<span id="t67" class="t " style="left:324.63px;top:201px;font-size:12.6px;color:#212121;letter-spacing:0.096px;">Amy Paul</span>
</section>
<section class="card" style="left:847px;top:473px;width:826px;height:59px;">
<svg class="ic " style="left:14.85px;top:19.05px;width:21.30px;height:21.30px" viewBox="0 0 24 24"><path fill="#00a994" d="M10,17L5,12L6.41,10.58L10,14.17L17.59,6.58L19,8M19,3H5C3.89,3 3,3.89 3,5V19A2,2 0 0,0 5,21H19A2,2 0 0,0 21,19V5C21,3.89 20.1,3 19,3Z"/></svg>
<span id="t68" class="t " style="left:44.69px;top:19px;font-size:12.6px;color:#212121;letter-spacing:0.007px;">Filter by Percent Complete?</span>
<div class="fld" style="left:223.00px;top:15.00px;width:236.00px;height:31.00px;background:#fafafa;border-color:#bcbcbc">
</div>
<span id="t69" class="t " style="left:235.59px;top:21px;font-size:12.2px;color:#212121;letter-spacing:-0.4px;">&lt;=</span>
<svg class="ic " style="left:432.80px;top:21.45px;width:21.60px;height:21.60px" viewBox="0 0 24 24"><path fill="#757575" d="M7,10L12,15L17,10H7Z"/></svg>
<div class="fld" style="left:468.00px;top:15.00px;width:349.00px;height:31.00px;background:#fff;border-color:#bcbcbc">
</div>
<div class="notch" style="left:476.00px;top:15.00px;width:24.00px;height:1px;background:#fff"></div>
<span id="t70" class="t lbl" style="left:480.68px;top:4px;font-size:9.45px;color:#666666;letter-spacing:-0.3px;">% *</span>
<span id="t71" class="t " style="left:480.98px;top:22px;font-size:12.6px;color:#212121;">50</span>
</section>
<section class="card" style="left:847px;top:539px;width:826px;height:58px;">
<svg class="ic " style="left:14.85px;top:18.85px;width:21.30px;height:21.30px" viewBox="0 0 24 24"><path fill="#00a994" d="M10,17L5,12L6.41,10.58L10,14.17L17.59,6.58L19,8M19,3H5C3.89,3 3,3.89 3,5V19A2,2 0 0,0 5,21H19A2,2 0 0,0 21,19V5C21,3.89 20.1,3 19,3Z"/></svg>
<span id="t72" class="t " style="left:44.69px;top:19px;font-size:12.6px;color:#212121;letter-spacing:0.112px;">Filter by Activity Status?</span>
<div class="fld" style="left:203.00px;top:14.00px;width:274.00px;height:32.00px;background:#fafafa;border-color:#bcbcbc">
</div>
<span id="t73" class="t " style="left:215.76px;top:20px;font-size:10.8px;color:#212121;">=</span>
<svg class="ic " style="left:450.90px;top:20.45px;width:21.60px;height:21.60px" viewBox="0 0 24 24"><path fill="#757575" d="M7,10L12,15L17,10H7Z"/></svg>
<div class="fld" style="left:486.00px;top:14.00px;width:331.00px;height:32.00px;background:#fafafa;border-color:#bcbcbc">
</div>
<span id="t74" class="t " style="left:498.33px;top:21px;font-size:12.6px;color:#212121;letter-spacing:0.107px;">In Progress</span>
<svg class="ic " style="left:791.70px;top:20.45px;width:21.60px;height:21.60px" viewBox="0 0 24 24"><path fill="#757575" d="M7,10L12,15L17,10H7Z"/></svg>
</section>
<div class="sbar"></div><div class="sedge"></div>
</body></html>
